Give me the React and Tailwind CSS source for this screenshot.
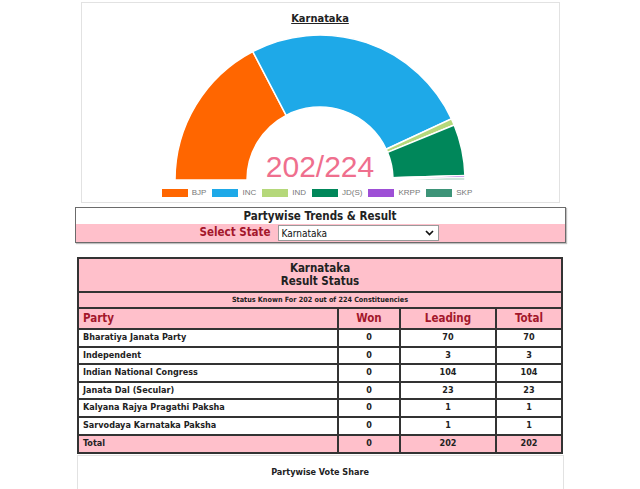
import React from 'react';

const parties = [
  { code: 'BJP', seats: 70, color: '#ff6600' },
  { code: 'INC', seats: 104, color: '#1ea9e8' },
  { code: 'IND', seats: 3, color: '#b5d87a' },
  { code: 'JD(S)', seats: 23, color: '#00875a' },
  { code: 'KRPP', seats: 1, color: '#9e4fd6' },
  { code: 'SKP', seats: 1, color: '#3d9478' },
];

const rows = [
  ['Bharatiya Janata Party', 0, 70, 70],
  ['Independent', 0, 3, 3],
  ['Indian National Congress', 0, 104, 104],
  ['Janata Dal (Secular)', 0, 23, 23],
  ['Kalyana Rajya Pragathi Paksha', 0, 1, 1],
  ['Sarvodaya Karnataka Paksha', 0, 1, 1],
];

const CX = 150;
const CY = 147;
const RO = 145;
const RI = 73;

const pt = (r, deg) => {
  const a = (deg * Math.PI) / 180;
  return `${(CX + r * Math.cos(a)).toFixed(2)} ${(CY - r * Math.sin(a)).toFixed(2)}`;
};

const arc = (a1, a2) =>
  `M ${pt(RO, a1)} A ${RO} ${RO} 0 0 1 ${pt(RO, a2)} L ${pt(RI, a2)} A ${RI} ${RI} 0 0 0 ${pt(RI, a1)} Z`;

const Gauge = () => {
  const total = parties.reduce((s, p) => s + p.seats, 0);
  let start = 180;
  return (
    <svg width="300" height="150" viewBox="0 0 300 150" className="block mx-auto">
      {parties.map((p) => {
        const sweep = (p.seats / total) * 180;
        const d = arc(start, start - sweep);
        start -= sweep;
        return <path key={p.code} d={d} fill={p.color} stroke="#fff" strokeWidth="1.5" />;
      })}
      <text
        x={CX}
        y="144"
        textAnchor="middle"
        fill="#ef6f8e"
        style={{ fontFamily: '"Liberation Sans", Arial, sans-serif', fontSize: '30px' }}
      >
        202/224
      </text>
    </svg>
  );
};

const App = () => {
  return (
    <div className="w-[640px] h-[489px] overflow-hidden bg-white font-['DejaVu_Sans_Condensed','DejaVu_Sans',sans-serif]">
      {/* Seat chart */}
      <div className="w-[479px] h-[201px] mx-auto mt-[2px] border border-[#e2e2e2] bg-white">
        <div className="pt-[9px] text-center text-[11px] leading-[14px] font-bold text-[#222] underline">Karnataka</div>
        <div className="mt-[7px]">
          <Gauge />
        </div>
        <div className="mt-[5px] flex justify-center items-center gap-[6px] pr-[6px] font-['Liberation_Sans',Arial,sans-serif] text-[8px] leading-[10px] text-[#777]">
          {parties.map((p) => (
            <div key={p.code} className="flex items-center gap-[4px]">
              <span className="inline-block w-[26px] h-[8px]" style={{ background: p.color }} />
              <span>{p.code}</span>
            </div>
          ))}
        </div>
      </div>

      {/* Trends selector */}
      <div className="w-[491px] mx-auto mt-[4px] border border-[#6b6b6b] shadow-[1px_1px_1px_rgba(0,0,0,0.25)]">
        <div className="h-[16px] bg-white text-center text-[11.5px] leading-[16px] font-bold text-[#222]">
          Partywise Trends &amp; Result
        </div>
        <div className="h-[18px] bg-[#ffc0cb] flex items-center justify-center gap-[7px] pr-[2px]">
          <span className="text-[11.5px] font-bold text-[#a3172b]">Select State</span>
          <div className="w-[161px] h-[16px] bg-white border border-[#9a9a9a] flex items-center justify-between pl-[3px] pr-[4px]">
            <span className="text-[10px] text-[#111] font-['DejaVu_Sans_Condensed',sans-serif]">Karnataka</span>
            <svg width="9" height="6" viewBox="0 0 9 6">
              <path d="M1 1 L4.5 4.5 L8 1" fill="none" stroke="#111" strokeWidth="1.7" />
            </svg>
          </div>
        </div>
      </div>

      {/* Result table */}
      <table className="w-[486px] mx-auto mt-[14px] border-collapse border-2 border-[#333] text-[9px] font-bold text-[#222]">
        <tbody>
          <tr className="bg-[#ffc0cb]">
            <td colSpan={4} className="border-2 border-[#333] h-[34px] text-center text-[11.5px] leading-[13px]">
              Karnataka
              <br />
              Result Status
            </td>
          </tr>
          <tr className="bg-[#ffc0cb]">
            <td colSpan={4} className="border-2 border-[#333] h-[16px] text-center text-[7.2px] leading-[10px]">
              Status Known For 202 out of 224 Constituencies
            </td>
          </tr>
          <tr className="bg-[#ffc0cb] text-[11.5px] text-[#a3172b]">
            <td className="border-2 border-[#333] h-[21px] pl-[4px] w-[260px]">Party</td>
            <td className="border-2 border-[#333] text-center w-[62px]">Won</td>
            <td className="border-2 border-[#333] text-center w-[96px]">Leading</td>
            <td className="border-2 border-[#333] text-center">Total</td>
          </tr>
          {rows.map((r) => (
            <tr key={r[0]} className="bg-white">
              <td className="border-2 border-[#333] h-[17.6px] pl-[4px]">{r[0]}</td>
              <td className="border-2 border-[#333] text-center">{r[1]}</td>
              <td className="border-2 border-[#333] text-center">{r[2]}</td>
              <td className="border-2 border-[#333] text-center">{r[3]}</td>
            </tr>
          ))}
          <tr className="bg-[#ffc0cb]">
            <td className="border-2 border-[#333] h-[18px] pl-[4px]">Total</td>
            <td className="border-2 border-[#333] text-center">0</td>
            <td className="border-2 border-[#333] text-center">202</td>
            <td className="border-2 border-[#333] text-center">202</td>
          </tr>
        </tbody>
      </table>

      {/* Vote share */}
      <div className="w-[487px] h-[60px] mx-auto mt-[1px] border border-[#e2e2e2] bg-white">
        <div className="pt-[10px] text-center text-[9px] font-bold text-[#222]">Partywise Vote Share</div>
      </div>
    </div>
  );
};

export default App;
